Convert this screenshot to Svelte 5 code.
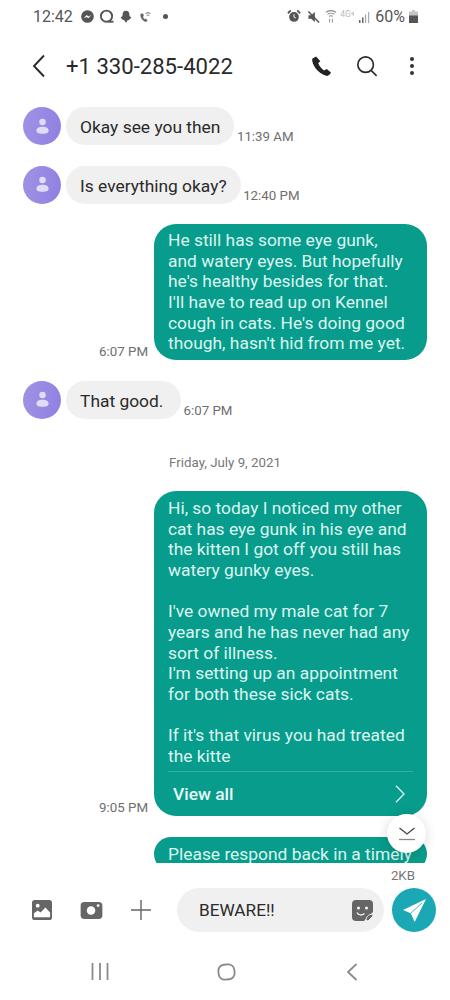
<script>
  const thread = [
    { type: 'in', text: 'Okay see you then', time: '11:39 AM' },
    { type: 'in', text: 'Is everything okay?', time: '12:40 PM' },
    {
      type: 'out',
      time: '6:07 PM',
      lines: [
        'He still has some eye gunk,',
        'and watery eyes. But hopefully',
        "he's healthy besides for that.",
        "I'll have to read up on Kennel",
        "cough in cats. He's doing good",
        "though, hasn't hid from me yet."
      ]
    },
    { type: 'in', text: 'That good.', time: '6:07 PM' }
  ];

  const longLines = [
    'Hi, so today I noticed my other',
    'cat has eye gunk in his eye and',
    'the kitten I got off you still has',
    'watery gunky eyes.',
    '',
    "I've owned my male cat for 7",
    'years and he has never had any',
    'sort of illness.',
    "I'm setting up an appointment",
    'for both these sick cats.',
    '',
    "If it's that virus you had treated",
    'the kitte'
  ];
</script>

<div class="phone">
  <header class="status">
    <div class="status-left">
      <span class="clock">12:42</span>
      <svg width="13" height="13" viewBox="0 0 14 14"><circle cx="7" cy="7" r="6.8" fill="#555"/><path d="M3 9l3-3.500 2 1.500 3-1.500-3 3.500-2-1.500z" fill="#fff"/></svg>
      <svg width="15" height="15" viewBox="0 0 15 15"><circle cx="7.500" cy="7.200" r="5.600" fill="none" stroke="#555" stroke-width="1.900"/><path d="M9 12.700h5.500" stroke="#555" stroke-width="1.900"/></svg>
      <svg width="14" height="14" viewBox="0 0 14 14"><path d="M7 .8c2.300 0 3.400 1.700 3.400 3.700 0 1 .2 1.900 1.200 2.500.9.500.9 1 .1 1.400l-1 .3-.4 1.300-1.700.2C8 11.200 7.600 12.500 7 12.500s-1-1.300-1.600-2.300l-1.700-.2-.4-1.300-1-.3c-.8-.4-.8-.9.100-1.400 1-.6 1.200-1.500 1.200-2.500C3.600 2.500 4.700.8 7 .8z" fill="#555"/></svg>
      <svg width="14" height="14" viewBox="0 0 14 14" fill="none" stroke="#666"><path d="M2.500 4c-.8 3 2 7 5.500 8l1.700-1.700-2.200-1.700-1 .6c-.8-.7-1.300-1.500-1.600-2.500l1-.8L5 3.200z" fill="#666" stroke="none"/><path d="M7.500 3.500c1.500-1 3.500-1 5 0M8.800 5.500c.8-.5 1.700-.5 2.500 0" stroke-width="1"/></svg>
      <span class="dot"></span>
    </div>
    <div class="status-right">
      <svg width="14" height="15" viewBox="0 0 15 15"><circle cx="7.500" cy="8" r="5.200" fill="#555"/><path d="M7.500 5v3.200l2 1" stroke="#fff" fill="none"/><path d="M1 4l3-3M14 4l-3-3" stroke="#555" stroke-width="2"/></svg>
      <svg class="mute" width="13" height="14" viewBox="0 0 14 14"><path d="M1.500 5h3L8.500 1.500v11L4.500 9h-3z" fill="#555"/><path d="M1.500 1 13 13" stroke="#555" stroke-width="1.600"/></svg>
      <svg class="wifi" width="12" height="15" viewBox="0 0 13 15" fill="none" stroke="#888" stroke-width="1.200"><path d="M1 3c3-2.500 8-2.500 11 0M2.800 5.200c2-1.600 5.400-1.600 7.400 0M4.500 7.400c1.200-.8 2.800-.8 4 0"/><path d="M5 10v4M8 10v4" stroke-width="1"/></svg>
      <span class="lte">4G+</span>
      <svg class="signal" width="12" height="12" viewBox="0 0 12 12"><path d="M1 9h1.500v3H1zM4 6.500h1.500V12H4z" fill="#666"/><path d="M7 3.500h1.200V12H7zM10 1h1.200v11H10z" fill="#aaa"/></svg>
      <span class="pct">60%</span>
      <svg class="batt" width="9" height="13" viewBox="0 0 9 13"><path d="M3 0h3v1.500h3V13H0V1.500h3z" fill="#c4c4c4"/><path d="M0 5.500h9V13H0z" fill="#555"/></svg>
    </div>
  </header>

  <nav class="toolbar">
    <svg class="back" width="16" height="26" viewBox="0 0 16 26"><path d="M13 2.500 3 13l10 10.500" fill="none" stroke="#2a2a2a" stroke-width="1.900"/></svg>
    <span class="number">+1 330-285-4022</span>
    <svg class="call" width="22" height="22" viewBox="0 0 24 24"><path d="M6.600 1.500 2.400 4.200C1.600 9.800 8 20.600 18.500 22.800c1.700-.2 3.800-2 4.400-3.800l-4.700-3.700-2.900 1.600c-2.500-1.400-5.400-5-6.300-8.100l2.300-2z" fill="#222"/></svg>
    <svg class="search" width="22" height="22" viewBox="0 0 24 24" fill="none" stroke="#2a2a2a" stroke-width="1.800"><circle cx="10.500" cy="10.500" r="8.500"/><path d="m16.500 16.800 6 6"/></svg>
    <svg class="more" width="6" height="20" viewBox="0 0 6 20"><circle cx="3" cy="3" r="2" fill="#333"/><circle cx="3" cy="10" r="2" fill="#333"/><circle cx="3" cy="17" r="2" fill="#333"/></svg>
  </nav>

  <main class="messages">
    {#each thread as m}
      {#if m.type === 'in'}
        <div class="row-in">
          <div class="avatar">
            <svg width="13" height="17" viewBox="0 0 16 20"><circle cx="8" cy="4.500" r="4" fill="#e2dbf6"/><path d="M.5 15c0-3 3-4.800 7.500-4.800s7.500 1.800 7.500 4.800c0 3-2 4-7.500 4S.5 18 .5 15z" fill="#e2dbf6"/></svg>
          </div>
          <div class="bubble-in">{m.text}</div>
          <span class="time">{m.time}</span>
        </div>
      {:else}
        <div class="row-out">
          <span class="time">{m.time}</span>
          <div class="bubble-out">
            {#each m.lines as line}<div class="line">{line}</div>{/each}
          </div>
        </div>
      {/if}
    {/each}

    <div class="date">Friday, July 9, 2021</div>

    <div class="row-out">
      <span class="time">9:05 PM</span>
      <div class="bubble-out long">
        {#each longLines as line}<div class="line">{line || '\u00a0'}</div>{/each}
        <div class="view-all">
          <span>View all</span>
          <svg width="10" height="18" viewBox="0 0 10 18"><path d="M1 .7 9 9l-8 8.300" fill="none" stroke="#dcf5f0" stroke-width="1.300"/></svg>
        </div>
      </div>
    </div>

    <div class="row-out cut">
      <div class="bubble-out">
        <div class="line">Please respond back in a timely</div>
      </div>
    </div>

    <button class="fab" aria-label="Scroll to bottom">
      <svg width="18" height="14" viewBox="0 0 18 14" fill="none" stroke="#444" stroke-width="1.300"><path d="M1.500 1 9 7l7.500-6"/><path d="M1 12.500h16" stroke="#888"/></svg>
    </button>
  </main>

  <div class="composer">
    <div class="size">2KB</div>
    <div class="compose-row">
      <svg class="ico-gallery" width="20" height="20" viewBox="0 0 21 21"><rect width="21" height="21" rx="3" fill="#666"/><circle cx="6" cy="6" r="2" fill="#fff"/><path d="M2 18v-4l4-3 3 2 5-5 5 5v5z" fill="#fff"/></svg>
      <svg class="ico-camera" width="23" height="17" viewBox="0 0 23 18"><rect width="23" height="18" rx="4" fill="#666"/><circle cx="11" cy="9" r="4.500" fill="#fff"/><circle cx="18.500" cy="3.800" r="1.500" fill="#fff"/></svg>
      <svg class="ico-plus" width="20" height="20" viewBox="0 0 21 21"><path d="M10.500 0v21M0 10.500h21" stroke="#666" stroke-width="1.500"/></svg>
      <div class="input">
        <span>BEWARE!!</span>
        <svg width="21" height="21" viewBox="0 0 21 21"><path d="M4 0h13a4 4 0 0 1 4 4v8l-9 9H4a4 4 0 0 1-4-4V4a4 4 0 0 1 4-4z" fill="#666"/><circle cx="6.500" cy="8" r="1.600" fill="#f0f0f0"/><circle cx="14.500" cy="8" r="1.600" fill="#f0f0f0"/><path d="M5 12.500c1.500 3 5 3 7.500 1" fill="none" stroke="#f0f0f0" stroke-width="1.500"/><path d="M14 20.500c0-3.500 2-6 6.500-6.500l.5 2-5 5z" fill="#666" stroke="#f0f0f0" stroke-width="1"/></svg>
      </div>
      <button class="send" aria-label="Send">
        <svg width="23" height="23" viewBox="0 0 23 23"><path d="M23 0 0 11l7.800 3.200L11.700 23z" fill="#fff"/><path d="M19 4 7.800 14.200" stroke="#1aa8b4" stroke-width=".8"/></svg>
      </button>
    </div>
  </div>

  <footer class="navbar">
    <svg width="18" height="17" viewBox="0 0 18 17"><path d="M1.500 0v17M9 0v17M16.500 0v17" stroke="#8a8a8a" stroke-width="1.800"/></svg>
    <svg class="home" width="19" height="18" viewBox="0 0 19 18"><rect x="1.500" y="1.500" width="16" height="15" rx="6" fill="none" stroke="#8a8a8a" stroke-width="1.800" transform="rotate(-6 9.500 9)"/></svg>
    <svg width="12" height="18" viewBox="0 0 12 18"><path d="M10.500 1 2 9l8.500 8" fill="none" stroke="#8a8a8a" stroke-width="1.800"/></svg>
  </footer>
</div>

<style>
  :global(body) {
    margin: 0;
    background: #fff;
  }
  .phone {
    width: 450px;
    height: 1000px;
    display: flex;
    flex-direction: column;
    font-family: Roboto, "Liberation Sans", sans-serif;
    color: #2a2a2a;
    background: #fff;
    overflow: hidden;
  }
  .status {
    height: 33px;
    display: flex;
    justify-content: space-between;
    align-items: center;
    padding: 0 32px 0 33px;
    color: #555;
  }
  .status-left {
    display: flex;
    align-items: center;
    gap: 5px;
  }
  .status-right {
    display: flex;
    align-items: center;
  }
  .clock {
    font-size: 16px;
    margin-right: 3px;
  }
  .dot {
    width: 5px;
    height: 5px;
    border-radius: 50%;
    background: #555;
    margin-left: 6px;
  }
  .mute {
    margin-left: 6px;
  }
  .wifi {
    margin-left: 5px;
  }
  .lte {
    width: 14px;
    font-size: 8.500px;
    color: #bbb;
    margin-left: 3px;
    white-space: nowrap;
    overflow: hidden;
    margin-top: -6px;
  }
  .signal {
    margin-left: 4px;
  }
  .pct {
    font-size: 16px;
    margin-left: 5px;
  }
  .batt {
    margin-left: 4px;
  }
  .toolbar {
    height: 64px;
    box-sizing: border-box;
    display: flex;
    align-items: center;
    padding: 2px 35px 0 31px;
  }
  .number {
    font-size: 22.100px;
    margin-left: 19px;
    flex: 1;
  }
  .search {
    margin: 0 0 0 24px;
  }
  .more {
    margin-left: 31px;
  }
  .messages {
    position: relative;
    height: 766px;
    padding-top: 10px;
    box-sizing: border-box;
    overflow: hidden;
    flex-shrink: 0;
  }
  .row-in {
    display: flex;
    align-items: flex-end;
    padding-left: 23px;
    margin-bottom: 20.500px;
  }
  .avatar {
    width: 38px;
    height: 38px;
    border-radius: 50%;
    background: linear-gradient(100deg, #a093e4, #8f80e2);
    display: flex;
    align-items: center;
    justify-content: center;
    margin-right: 5px;
  }
  .bubble-in {
    height: 38px;
    min-width: 87px;
    line-height: 40px;
    padding: 0 14px;
    border-radius: 19px;
    background: #f0f0f0;
    font-size: 17.400px;
  }
  .time {
    font-size: 13.300px;
    color: #6e6e6e;
    margin: 0 3px 1px 2.500px;
  }
  .row-out {
    display: flex;
    justify-content: flex-end;
    align-items: flex-end;
    padding-right: 23px;
    margin-bottom: 21px;
  }
  .row-out .time {
    margin: 0 6px 1px 0;
  }
  .bubble-out {
    width: 273px;
    box-sizing: border-box;
    padding: 6px 14px;
    border-radius: 22px;
    background: #079c8b;
    color: #dcf5f0;
    font-size: 17.400px;
    line-height: 20.650px;
    white-space: nowrap;
  }
  .long {
    padding-top: 7px;
    padding-bottom: 0;
  }
  .cut {
    margin-bottom: 0;
  }
  .cut .bubble-out {
    padding-top: 7px;
  }
  .date {
    text-align: center;
    font-size: 13.300px;
    color: #777;
    margin: 36px 0 21px;
  }
  .view-all {
    display: flex;
    justify-content: space-between;
    align-items: center;
    height: 44.500px;
    box-sizing: border-box;
    margin-top: 5px;
    padding: 0 8px 0 5px;
    border-top: 1px solid #35b0a2;
    font-weight: 500;
    color: #e8f8f5;
  }
  .fab {
    position: absolute;
    right: 24px;
    top: 717px;
    width: 39px;
    height: 39px;
    border: 0;
    border-radius: 50%;
    background: #fff;
    box-shadow: 0 2px 12px rgba(0, 0, 0, 0.16);
    display: flex;
    align-items: center;
    justify-content: center;
    padding: 0;
  }
  .composer {
    height: 71px;
    flex-shrink: 0;
    background: #fff;
  }
  .size {
    text-align: right;
    font-size: 13.300px;
    color: #777;
    padding: 5px 35px 0 0;
    height: 19px;
    box-sizing: border-box;
  }
  .compose-row {
    display: flex;
    align-items: center;
    padding-left: 32px;
    margin-top: 6px;
  }
  .ico-camera {
    margin-left: 28px;
  }
  .ico-plus {
    margin-left: 28px;
  }
  .input {
    width: 207px;
    height: 44px;
    box-sizing: border-box;
    margin-left: 26px;
    padding: 0 11px 0 22px;
    border-radius: 22px;
    background: #f0f0f0;
    display: flex;
    align-items: center;
    justify-content: space-between;
    font-size: 17.200px;
  }
  .send {
    width: 44px;
    height: 44px;
    margin-left: 8px;
    padding: 0;
    border: 0;
    border-radius: 50%;
    background: #1aa8b4;
    display: flex;
    align-items: center;
    justify-content: center;
  }
  .navbar {
    flex: 1;
    display: flex;
    align-items: center;
    justify-content: space-between;
    padding: 9px 92px 0 91px;
  }
  .home {
    margin-right: 2px;
  }
</style>
